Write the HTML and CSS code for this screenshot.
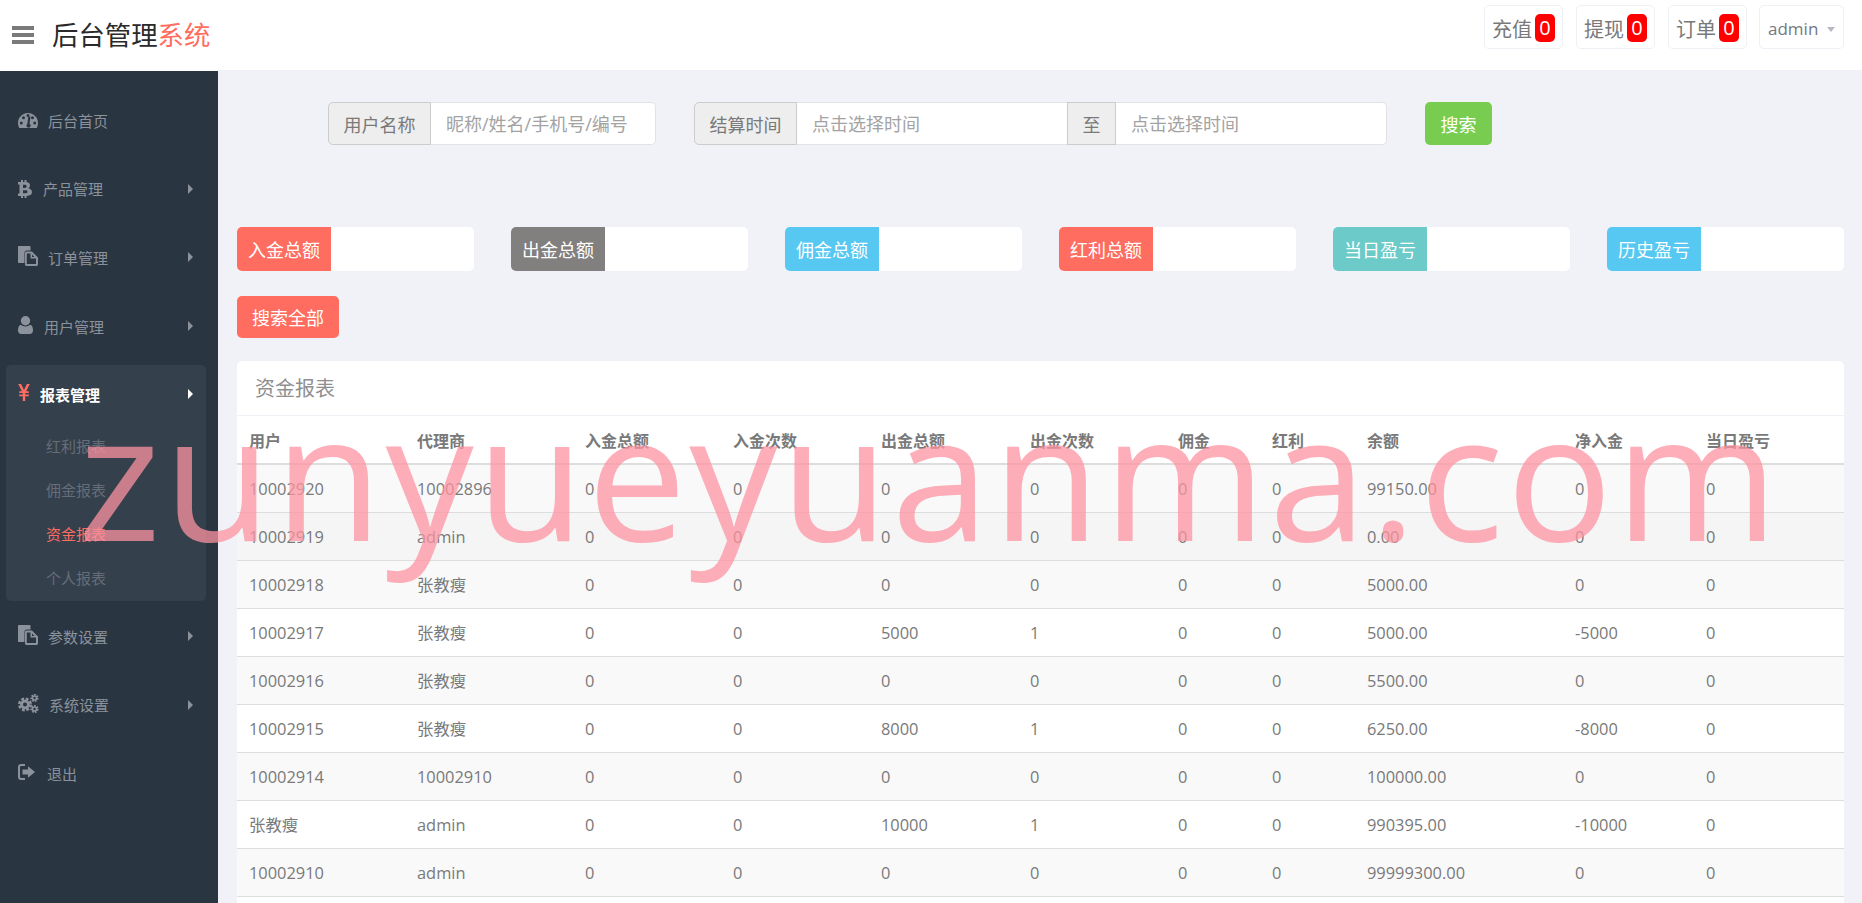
FILE: index.html
```html
<!DOCTYPE html>
<html lang="zh-CN">
<head>
<meta charset="utf-8">
<title>后台管理系统</title>
<link rel="stylesheet" href="styles.css">
</head>
<body>
<header class="topbar">
  <div class="brand">
    <svg class="burger" viewBox="0 0 22 18"><path d="M0 0h22v4H0zM0 7h22v4H0zM0 14h22v4H0z"/></svg>
    <span class="logo">后台管理<span class="logo-red">系统</span></span>
  </div>
  <nav class="top-actions">
    <a class="top-btn">充值<span class="badge">0</span></a>
    <a class="top-btn">提现<span class="badge">0</span></a>
    <a class="top-btn">订单<span class="badge">0</span></a>
    <a class="top-btn user-btn">admin<i class="caret"></i></a>
  </nav>
</header>
<div class="layout">
  <aside class="sidebar">
    <div class="menu-item">
      <svg class="ico ico-dash" viewBox="0 0 20 15"><path fill-rule="evenodd" d="M10 0C4.5 0 0 4.4 0 10c0 1.700.4 3.300 1.100 4.700.1.200.3.300.6.300h16.600c.3 0 .5-.1.600-.3.700-1.400 1.100-3 1.100-4.700 0-5.600-4.500-10-10-10zM3.300 11.500a1.500 1.500 0 1 1 0-3 1.500 1.500 0 0 1 0 3zM5.500 6.200a1.500 1.500 0 1 1 0-3 1.500 1.500 0 0 1 0 3zM10 4a1.500 1.500 0 1 1 0-3 1.500 1.500 0 0 1 0 3zM12.500 3.500l-1 7.200a2 2 0 1 1-2.200.2l1-7.200zM14.500 6.200a1.500 1.500 0 1 1 0-3 1.500 1.500 0 0 1 0 3zM16.700 11.500a1.500 1.500 0 1 1 0-3 1.500 1.500 0 0 1 0 3z"/></svg>
      <span class="menu-text gap-dash">后台首页</span>
    </div>
    <div class="menu-item">
      <svg class="ico ico-btc" viewBox="0 0 14 18"><path fill-rule="evenodd" d="M3 0h2v2h1.500V0h2v2.100c2 .3 3.500 1.400 3.500 3.400 0 1.200-.6 2.200-1.700 2.800C12.100 8.800 14 9.900 14 12c0 2.600-2 3.800-5.500 3.900V18h-2v-2H5v2H3v-2H0v-2.600h1.500V4.600H0V2h3zM5 4.800v3.100h1.800c1.100 0 1.900-.5 1.900-1.550S7.900 4.800 6.800 4.800zm0 5.500v3h2.300c1.300 0 2.200-.4 2.200-1.500s-.9-1.500-2.200-1.500z"/></svg>
      <span class="menu-text gap-btc">产品管理</span><i class="arrow"></i>
    </div>
    <div class="menu-item">
      <svg class="ico ico-copy" viewBox="0 0 20 20"><use href="#copy-shape"/></svg>
      <span class="menu-text gap-copy">订单管理</span><i class="arrow"></i>
    </div>
    <div class="menu-item">
      <svg class="ico ico-user" viewBox="0 0 15 18"><path d="M7.500 0a4.700 4.700 0 0 1 4.700 4.700 4.700 4.700 0 0 1-9.400 0A4.700 4.700 0 0 1 7.500 0zM3 8.800c1.100 1 2.700 1.600 4.500 1.600s3.400-.6 4.500-1.600c2 .3 3 2.500 3 5.700 0 2.200-1.400 3.500-3.200 3.500H3.200C1.400 18 0 16.700 0 14.500c0-3.200 1-5.400 3-5.700z"/></svg>
      <span class="menu-text gap-user">用户管理</span><i class="arrow"></i>
    </div>
    <section class="menu-group">
      <div class="group-head">
        <svg class="ico ico-yen" viewBox="0 0 12 17"><path d="M.2 0h2.900l2.900 6 2.900-6h2.900L8.200 7.300h2.600v1.800H7.200v1.300h3.600v1.800H7.200V17H4.800v-4.800H1.200v-1.800h3.600V9.100H1.200V7.300h2.600z"/></svg>
        <span class="menu-text gap-yen">报表管理</span><i class="arrow"></i>
      </div>
      <ul class="submenu">
        <li>红利报表</li>
        <li>佣金报表</li>
        <li class="current">资金报表</li>
        <li>个人报表</li>
      </ul>
    </section>
    <div class="menu-item">
      <svg class="ico ico-copy" viewBox="0 0 20 20"><use href="#copy-shape"/></svg>
      <span class="menu-text gap-copy">参数设置</span><i class="arrow"></i>
    </div>
    <div class="menu-item">
      <svg class="ico ico-cogs" viewBox="0 0 21 19">
        <circle class="cog-teeth" cx="7" cy="10.500" r="5.600" stroke-width="2.800" stroke-dasharray="2.800 1.600"/>
        <circle class="cog-ring" cx="7" cy="10.500" r="3.400" stroke-width="2.800"/>
        <circle class="cog-teeth" cx="16.500" cy="4" r="3.200" stroke-width="1.800" stroke-dasharray="1.700 1.150"/>
        <circle class="cog-ring" cx="16.500" cy="4" r="2" stroke-width="1.600"/>
        <circle class="cog-teeth" cx="16.500" cy="15" r="3.200" stroke-width="1.800" stroke-dasharray="1.700 1.150"/>
        <circle class="cog-ring" cx="16.500" cy="15" r="2" stroke-width="1.600"/>
      </svg>
      <span class="menu-text gap-cogs">系统设置</span><i class="arrow"></i>
    </div>
    <div class="menu-item">
      <svg class="ico ico-out" viewBox="0 0 17 16"><path d="M3 0h4v2H3.200C2.500 2 2 2.500 2 3.200v9.600c0 .7.500 1.200 1.200 1.200H7v2H3c-1.700 0-3-1.300-3-3V3c0-1.700 1.300-3 3-3zM10 2.200 17 8l-7 5.800V10.500H4.500v-5H10z"/></svg>
      <span class="menu-text gap-out">退出</span>
    </div>
  </aside>
  <main class="content">
    <form class="search-row">
      <div class="field field-name">
        <span class="addon addon-first">用户名称</span>
        <input class="text-input input-last" type="text" placeholder="昵称/姓名/手机号/编号">
      </div>
      <div class="field field-time">
        <span class="addon addon-first">结算时间</span>
        <input class="text-input" type="text" placeholder="点击选择时间">
        <span class="addon addon-mid">至</span>
        <input class="text-input input-last" type="text" placeholder="点击选择时间">
      </div>
      <button class="btn btn-green" type="button">搜索</button>
    </form>
    <div class="stats">
      <div class="stat"><span class="stat-label tone-red">入金总额</span></div>
      <div class="stat"><span class="stat-label tone-grey">出金总额</span></div>
      <div class="stat"><span class="stat-label tone-blue">佣金总额</span></div>
      <div class="stat"><span class="stat-label tone-red">红利总额</span></div>
      <div class="stat"><span class="stat-label tone-teal">当日盈亏</span></div>
      <div class="stat"><span class="stat-label tone-blue">历史盈亏</span></div>
    </div>
    <button class="btn btn-red" type="button">搜索全部</button>
    <section class="card">
      <h2 class="card-title">资金报表</h2>
      <table class="report">
        <colgroup>
          <col class="c-user"><col class="c-agent"><col class="c-n"><col class="c-n"><col class="c-n1"><col class="c-n"><col class="c-s"><col class="c-s1"><col class="c-bal"><col class="c-net"><col>
        </colgroup>
        <thead>
          <tr><th>用户</th><th>代理商</th><th>入金总额</th><th>入金次数</th><th>出金总额</th><th>出金次数</th><th>佣金</th><th>红利</th><th>余额</th><th>净入金</th><th>当日盈亏</th></tr>
        </thead>
        <tbody>
          <tr><td>10002920</td><td>10002896</td><td>0</td><td>0</td><td>0</td><td>0</td><td>0</td><td>0</td><td>99150.00</td><td>0</td><td>0</td></tr>
          <tr class="hover"><td>10002919</td><td>admin</td><td>0</td><td>0</td><td>0</td><td>0</td><td>0</td><td>0</td><td>0.00</td><td>0</td><td>0</td></tr>
          <tr><td>10002918</td><td>张教瘦</td><td>0</td><td>0</td><td>0</td><td>0</td><td>0</td><td>0</td><td>5000.00</td><td>0</td><td>0</td></tr>
          <tr><td>10002917</td><td>张教瘦</td><td>0</td><td>0</td><td>5000</td><td>1</td><td>0</td><td>0</td><td>5000.00</td><td>-5000</td><td>0</td></tr>
          <tr><td>10002916</td><td>张教瘦</td><td>0</td><td>0</td><td>0</td><td>0</td><td>0</td><td>0</td><td>5500.00</td><td>0</td><td>0</td></tr>
          <tr><td>10002915</td><td>张教瘦</td><td>0</td><td>0</td><td>8000</td><td>1</td><td>0</td><td>0</td><td>6250.00</td><td>-8000</td><td>0</td></tr>
          <tr><td>10002914</td><td>10002910</td><td>0</td><td>0</td><td>0</td><td>0</td><td>0</td><td>0</td><td>100000.00</td><td>0</td><td>0</td></tr>
          <tr><td>张教瘦</td><td>admin</td><td>0</td><td>0</td><td>10000</td><td>1</td><td>0</td><td>0</td><td>990395.00</td><td>-10000</td><td>0</td></tr>
          <tr><td>10002910</td><td>admin</td><td>0</td><td>0</td><td>0</td><td>0</td><td>0</td><td>0</td><td>99999300.00</td><td>0</td><td>0</td></tr>
        </tbody>
      </table>
    </section>
  </main>
</div>
<div class="watermark">zunyueyuanma.com</div>
<svg class="defs" width="0" height="0" aria-hidden="true">
  <symbol id="copy-shape" viewBox="0 0 20 20">
    <path d="M1 0h10.500c.6 0 1 .4 1 1v3.500H9C7.300 4.500 6.500 5.300 6.500 7v10H1c-.6 0-1-.4-1-1V1c0-.6.400-1 1-1z"/>
    <path fill-rule="evenodd" d="M8.500 5.500h5.500l6 6V18.500c0 .8-.7 1.500-1.500 1.500h-10c-.8 0-1.500-.7-1.500-1.500V7c0-.8.700-1.500 1.500-1.500zm.3 2v10.500h9.200v-5.500h-5.500v-5zM14 8.500v2.500h2.500z"/>
  </symbol>
</svg>
</body>
</html>
```
FILE: styles.css
```css
* { box-sizing: border-box; }
html, body { margin: 0; padding: 0; height: 903px; overflow: hidden; }
body {
  position: relative;
  background: #f1f2f7;
  color: #797979;
  font-family: "Open Sans", "Noto Sans CJK SC", sans-serif;
  font-size: 16px;
}
.defs { position: absolute; }

.topbar {
  height: 70px;
  background: #fff;
  display: flex;
  align-items: center;
  justify-content: space-between;
  padding: 0 18px 0 12px;
}
.brand { display: flex; align-items: center; gap: 18px; }
.burger { width: 22px; height: 18px; fill: #7a7a7a; }
.logo { font-size: 26.400px; color: #2a2a2a; line-height: 1; }
.logo-red { color: #ff6c60; }
.top-actions { display: flex; gap: 13px; margin-top: -16px; }
.top-btn {
  display: flex;
  align-items: center;
  height: 44px;
  width: 79px;
  padding: 2px 0 0 7px;
  border: 1px solid #eff0f6;
  border-radius: 5px;
  font-size: 20px;
  color: #797979;
}
.badge {
  width: 20px;
  height: 28px;
  margin-left: 3px;
  background: #f00;
  border-radius: 5px;
  color: #fff;
  text-align: center;
  line-height: 28px;
  font-size: 20px;
}
.user-btn { width: 85px; padding: 3px 0 0 8px; font-size: 17px; margin-left: -1px; color: #737880; }
.caret {
  margin-left: 9px;
  margin-top: 2px;
  border-top: 5px solid #b8b8c0;
  border-left: 4.500px solid transparent;
  border-right: 4.500px solid transparent;
}

.layout { display: flex; height: 833px; }
.sidebar {
  flex: none;
  width: 218px;
  background: #2a3542;
  border-top: 1px solid #fff;
  padding-top: 15px;
  color: #8b929b;
  font-size: 15px;
}
.menu-item, .group-head {
  display: flex;
  align-items: center;
  height: 68.600px;
  padding-left: 18px;
  position: relative;
}
.ico { flex: none; fill: #8b929b; }
.ico-dash { width: 20px; height: 15px; }
.ico-btc { width: 14px; height: 18px; }
.ico-copy { width: 20px; height: 20px; margin-top: -3px; }
.ico-user { width: 15px; height: 18px; margin-top: -3px; }
.ico-yen { width: 12px; height: 17px; fill: #ff6c60; margin-top: -5px; }
.ico-cogs { width: 21px; height: 19px; margin-top: -3px; }
.ico-out { width: 17px; height: 16px; margin-top: -3px; }
.cog-teeth, .cog-ring { fill: none; stroke: #8b929b; }
.gap-dash { margin-left: 10px; }
.gap-btc { margin-left: 11px; }
.gap-copy { margin-left: 10px; }
.gap-user { margin-left: 11px; }
.gap-yen { margin-left: 10px; }
.gap-cogs { margin-left: 10px; }
.gap-out { margin-left: 12px; }
.arrow {
  position: absolute;
  left: 188px;
  top: 50%;
  margin-top: -5px;
  border-left: 5px solid #8b929b;
  border-top: 5px solid transparent;
  border-bottom: 5px solid transparent;
}
.menu-group {
  margin: 4.600px 12px 1px 6px;
  background: #35404d;
  border-radius: 5px;
  height: 236px;
}
.group-head {
  height: 59px;
  padding-left: 12px;
  color: #fff;
  font-weight: 700;
  font-size: 15px;
  padding-top: 1px;
}
.group-head .arrow { left: 182px; border-left-color: #fff; }
.submenu {
  list-style: none;
  margin: 0;
  padding: 0 0 0 40px;
  color: #656d78;
  font-size: 15px;
}
.submenu li { height: 44px; line-height: 44px; }
.submenu .current { color: #ff6c60; }

.content { flex: 1; min-width: 0; padding: 32px 18px 0 19px; }
.search-row { display: flex; padding-left: 91px; height: 43px; }
.field { display: flex; height: 43px; }
.field-name { width: 328px; }
.field-time { width: 693px; margin-left: 38px; }
.addon {
  flex: none;
  display: flex;
  align-items: center;
  justify-content: center;
  background: #eee;
  border: 1px solid #ccc;
  font-size: 18px;
  color: #797979;
}
.addon-first { width: 103px; border-radius: 5px 0 0 5px; }
.addon-mid { width: 49px; }
.text-input {
  flex: 1;
  min-width: 0;
  height: 43px;
  padding: 0 15px;
  background: #fff;
  border: 1px solid #e2e2e4;
  border-left: 0;
  border-right: 0;
  font: inherit;
  font-size: 18px;
  outline: 0;
}
.input-last { border-right: 1px solid #e2e2e4; border-radius: 0 5px 5px 0; }
.text-input::placeholder { color: #a3a3a3; opacity: 1; }
.btn {
  border: 0;
  border-radius: 5px;
  color: #fff;
  font: inherit;
  font-size: 18px;
  padding: 0;
}
.btn-green { width: 67px; height: 43px; margin-left: 38px; background: #78cd51; }
.btn-red { display: block; width: 102px; height: 42px; margin-top: 25px; background: #ff6c60; }

.stats { display: flex; justify-content: space-between; margin-top: 82px; }
.stat { width: 237px; height: 44px; background: #fff; border-radius: 5px; overflow: hidden; }
.stat-label {
  display: flex;
  align-items: center;
  justify-content: center;
  width: 94px;
  height: 44px;
  color: #fff;
  font-size: 18px;
}
.tone-red { background: #ff6c60; }
.tone-grey { background: #82807e; }
.tone-blue { background: #57c8f2; }
.tone-teal { background: #6ccac9; }

.card { margin-top: 23px; background: #fff; border-radius: 5px; height: 600px; }
.card-title {
  margin: 0;
  height: 55px;
  padding-left: 18px;
  border-bottom: 1px solid #eff2f7;
  font-size: 20px;
  font-weight: 400;
  line-height: 56px;
  color: #8f8f8f;
}
.report { width: 100%; table-layout: fixed; border-collapse: collapse; }
.c-user, .c-agent { width: 168px; }
.c-n { width: 148px; }
.c-n1 { width: 149px; }
.c-s { width: 94px; }
.c-s1 { width: 95px; }
.c-bal { width: 208px; }
.c-net { width: 131px; }
.report th, .report td { padding: 0 12px; text-align: left; font-size: 16.400px; white-space: nowrap; }
.report th { height: 48px; border-bottom: 2px solid #ddd; font-weight: 700; font-size: 16px; color: #797979; }
.report td { height: 48px; border-bottom: 1px solid #ddd; }
.report tbody tr:nth-child(odd) { background: #f9f9f9; }
.report tbody tr.hover { background: #f5f5f5; }

.watermark {
  position: absolute;
  left: 78px;
  top: 353px;
  font-family: "Open Sans", sans-serif;
  font-size: 176px;
  letter-spacing: 3px;
  line-height: 240px;
  white-space: nowrap;
  color: rgba(252, 147, 160, .75);
  pointer-events: none;
}
```
